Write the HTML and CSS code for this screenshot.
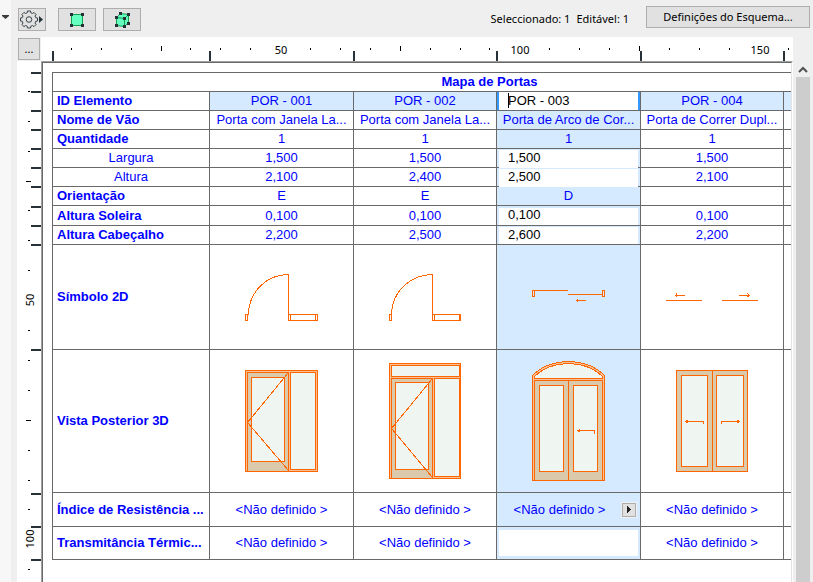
FILE: index.html
```html
<!DOCTYPE html>
<html lang="pt">
<head>
<meta charset="utf-8">
<title>Mapa de Portas</title>
<link rel="stylesheet" href="styles.css">
</head>
<body>
<aside class="rail">
  <svg class="rail-arrow" width="7" height="4" viewBox="0 0 7 4"><path d="M0 0h7v1L3.500 4 0 1z" fill="#3c3c3c"/></svg>
</aside>
<main class="main">
  <header class="toolbar">
    <button class="tool tool-settings" type="button" aria-label="Opções">
      <svg width="24" height="20" viewBox="0 0 24 20">
        <g fill="none" stroke="#37444a" stroke-width="1" stroke-linejoin="round">
          <path d="M7.200 3.800 7.500 2H10.500L10.800 3.800 12.500 4.500 14 3.400 16.100 5.500 15 7 15.700 8.700 17.500 9V12L15.700 12.300 15 14 16.100 15.500 14 17.600 12.500 16.500 10.800 17.200 10.500 19H7.500L7.200 17.200 5.500 16.500 4 17.600 1.900 15.500 3 14 2.300 12.300.5 12V9L2.300 8.700 3 7 1.900 5.500 4 3.400 5.500 4.500z" transform="translate(0 -1)"/>
          <circle cx="9" cy="9.500" r="2.800"/>
        </g>
        <path d="M19 6l4 3.500-4 3.500z" fill="#263238"/>
      </svg>
    </button>
    <button class="tool tool-wide" type="button" aria-label="Selecionar em 2D">
      <svg width="16" height="16" viewBox="0 0 16 16" shape-rendering="crispEdges">
        <path d="M2.500 2.500h11v11h-11z" fill="#66ffc2" stroke="#12a04c"/>
        <path d="M1 1h3v3H1zM12 1h3v3h-3zM1 12h3v3H1zM12 12h3v3h-3z" fill="#263238"/>
      </svg>
    </button>
    <button class="tool" type="button" aria-label="Selecionar em 3D">
      <svg width="16" height="16" viewBox="0 0 16 16">
        <path d="M2.500 5.500 6.500 1.500 14.500 2.500V10.500L10.500 14.500 2.500 13.500z" fill="#66ffc2" stroke="#12a04c"/>
        <path d="M2.500 5.500 10.500 6.500 14.500 2.500M10.500 6.500V14.500" fill="none" stroke="#12a04c"/>
        <path d="M5 0h3v3H5zM13 1h3v3h-3zM1 4h3v3H1zM9 5h3v3H9zM13 10h3v3h-3zM1 12h3v3H1zM9 13h3v3H9z" fill="#263238" shape-rendering="crispEdges"/>
      </svg>
    </button>
    <p class="status"><span>Seleccionado: 1</span><span>Editável: 1</span></p>
    <button class="scheme" type="button">Definições do Esquema...</button>
  </header>
  <section class="workspace">
    <div class="corner"><button class="corner-button" type="button">...</button></div>
    <svg class="ruler ruler-top" shape-rendering="crispEdges">
      <g transform="translate(-41 -37)">
        <path fill="#263238" d="M52 51h2v10h-2zM209 51h2v10h-2zM353 51h2v10h-2zM496 51h2v10h-2zM640 51h2v10h-2zM783 51h2v10h-2z"/>
        <path fill="#000" d="M71 48h1v2h-1zM101 48h1v2h-1zM131 48h1v2h-1zM161 46h1v5h-1zM190 48h1v2h-1zM220 48h1v2h-1zM250 48h1v2h-1zM310 48h1v2h-1zM340 48h1v2h-1zM370 48h1v2h-1zM400 46h1v5h-1zM430 48h1v2h-1zM460 48h1v2h-1zM489 48h1v2h-1zM549 48h1v2h-1zM579 48h1v2h-1zM609 48h1v2h-1zM639 46h1v5h-1zM669 48h1v2h-1zM699 48h1v2h-1zM729 48h1v2h-1zM788 48h1v2h-1z"/>
        <text x="281" y="54">50</text>
        <text x="520" y="54">100</text>
        <text x="760" y="54">150</text>
      </g>
    </svg>
    <svg class="ruler ruler-left" shape-rendering="crispEdges">
      <g transform="translate(-17 -61)">
        <path fill="#263238" d="M31 72h10v2H31zM31 91h10v2H31zM31 110h10v2H31zM31 129h10v2H31zM31 148h10v2H31zM31 167h10v2H31zM31 186h10v2H31zM31 206h10v2H31zM31 225h10v2H31zM31 244h10v2H31zM31 349h10v2H31zM31 493h10v2H31zM31 526h10v2H31zM31 559h10v2H31z"/>
        <path fill="#000" d="M28 91h2v1h-2zM28 121h2v1h-2zM28 151h2v1h-2zM26 181h5v1h-5zM28 210h2v1h-2zM28 240h2v1h-2zM28 270h2v1h-2zM28 330h2v1h-2zM28 360h2v1h-2zM28 390h2v1h-2zM26 420h5v1h-5zM28 450h2v1h-2zM28 480h2v1h-2zM28 509h2v1h-2zM28 569h2v1h-2z"/>
        <text transform="translate(34 300) rotate(-90)">50</text>
        <text transform="translate(34 539) rotate(-90)">100</text>
      </g>
    </svg>
    <div class="canvas"><div class="canvas-inner">
      <table class="schedule">
        <colgroup><col class="c-label"><col class="c-wide"><col class="c-door"><col class="c-wide"><col class="c-door"><col class="c-door"></colgroup>
        <tbody>
        <tr><th colspan="6" class="title">Mapa de Portas</th></tr>
        <tr class="ids"><th>ID Elemento</th><td>POR - 001</td><td>POR - 002</td>
          <td class="active"><input class="field" type="text" value="POR - 003" aria-label="ID Elemento"><span class="caret"></span></td>
          <td>POR - 004</td><td></td></tr>
        <tr><th>Nome de Vão</th><td>Porta com Janela La...</td><td>Porta com Janela La...</td><td class="sel">Porta de Arco de Cor...</td><td>Porta de Correr Dupl...</td><td></td></tr>
        <tr><th>Quantidade</th><td>1</td><td>1</td><td class="sel">1</td><td>1</td><td></td></tr>
        <tr><th class="sub">Largura</th><td>1,500</td><td>1,500</td><td class="sel"><input class="field over" type="text" value="1,500" aria-label="Largura"></td><td>1,500</td><td></td></tr>
        <tr><th class="sub">Altura</th><td>2,100</td><td>2,400</td><td class="sel"><input class="field over" type="text" value="2,500" aria-label="Altura"></td><td>2,100</td><td></td></tr>
        <tr><th>Orientação</th><td>E</td><td>E</td><td class="sel">D</td><td></td><td></td></tr>
        <tr class="tall"><th>Altura Soleira</th><td>0,100</td><td>0,100</td><td class="sel"><input class="field" type="text" value="0,100" aria-label="Altura Soleira"></td><td>0,100</td><td></td></tr>
        <tr><th>Altura Cabeçalho</th><td>2,200</td><td>2,500</td><td class="sel"><input class="field" type="text" value="2,600" aria-label="Altura Cabeçalho"></td><td>2,200</td><td></td></tr>
        <tr class="plan"><th>Símbolo 2D</th>
          <td><svg width="143" height="104" viewBox="210 245 143 104"><path d="M248.500 314.500A40 40 0 0 1 288.500 274.500V314.500M245.500 314.500h2v6h-2zM288.500 314.500h29v6h-29zM290.500 314.500v6M315.500 314.500v6"/></svg></td>
          <td><svg width="142" height="104" viewBox="354 245 142 104"><path d="M391.500 314.500A41 40 0 0 1 432.500 274.500V314.500M389.500 314.500h2v6h-2zM432.500 314.500h28v6h-28zM434.500 314.500v6M459.500 314.500v6"/></svg></td>
          <td class="sel"><svg width="143" height="104" viewBox="497 245 143 104"><path d="M532.500 290.500h2v6h-2zM602.500 290.500h2v6h-2zM534 290.500h34M568 294.500h35M576 300.500h10M577.500 299v3"/></svg></td>
          <td><svg width="142" height="104" viewBox="641 245 142 104"><path d="M666 300.500h36M722 300.500h36M675 295.500h10M676.500 293v4M739 295.500h11M748.500 294v3M747.500 293v1M747.500 296v1"/></svg></td>
          <td></td></tr>
        <tr class="view"><th>Vista Posterior 3D</th>
          <td><svg width="143" height="142" viewBox="210 350 143 142">
            <path class="frame" d="M245.500 370.500h72v101h-72z"/><path class="leaf" d="M247.500 372.500h41v99h-41z"/>
            <path class="glass" d="M251.500 377.500h33v84h-33zM290.500 372.500h25v97h-25z"/><path d="M288.500 372.500 247.500 422.500 288.500 470.500"/></svg></td>
          <td><svg width="142" height="142" viewBox="354 350 142 142">
            <path class="frame" d="M389.500 363.500h71v115h-71z"/><path class="leaf" d="M391.500 378.500h41v100h-41z"/>
            <path class="glass" d="M391.500 365.500h68v11h-68zM395.500 382.500h33v87h-33zM434.500 378.500h25v98h-25z"/><path d="M432.500 378.500 391.500 428.500 432.500 477.500"/></svg></td>
          <td class="sel"><svg width="143" height="142" viewBox="497 350 143 142">
            <path class="frame" d="M532.500 480.500V375.500C551 357 586 357 604.500 375.500V480.500z"/>
            <path class="glass" d="M534.500 378.500V376.500C552 359.500 585 359.500 602.500 376.500V378.500z"/>
            <path class="leaf" d="M534.500 380.500h34v100h-34zM568.500 380.500h34v100h-34z"/>
            <path class="glass" d="M539.500 385.500h24v86h-24zM573.500 385.500h24v86h-24z"/><path d="M577 430.500h17.500V434M578.500 430v2M579.500 429v3"/></svg></td>
          <td><svg width="142" height="142" viewBox="641 350 142 142">
            <path class="leaf" d="M676.500 370.500h36v101h-36zM712.500 370.500h35v101h-35z"/>
            <path class="glass" d="M681.500 375.500h26v91h-26zM716.500 375.500h27v91h-27z"/><path d="M685 421.500h18.500V424M686.500 420v3M687.500 420v3M740 421.500h-18.500V424M737.500 420v3M738.500 420v3"/></svg></td>
          <td></td></tr>
        <tr class="index"><th>Índice de Resistência ...</th><td>&lt;Não definido &gt;</td><td>&lt;Não definido &gt;</td>
          <td class="sel"><div class="choice"><span>&lt;Não definido &gt;</span><button class="more" type="button" aria-label="Escolher valor"><svg width="4" height="7" viewBox="0 0 4 7"><path d="M0 0l4 3.500L0 7z" fill="#222"/></svg></button></div></td>
          <td>&lt;Não definido &gt;</td><td></td></tr>
        <tr class="trans"><th>Transmitância Térmic...</th><td>&lt;Não definido &gt;</td><td>&lt;Não definido &gt;</td>
          <td class="sel"><input class="field large" type="text" value="" aria-label="Transmitância Térmica"></td>
          <td>&lt;Não definido &gt;</td><td></td></tr>
        </tbody>
      </table>
    </div></div>
    <div class="scrollbar">
      <svg class="scroll-up" width="15" height="16" viewBox="0 0 15 16"><path d="M3 11 7 7l4 4" fill="none" stroke="#505050" stroke-width="2"/></svg>
      <div class="thumb"></div>
    </div>
  </section>
</main>
</body>
</html>
```
FILE: styles.css
```css
* { box-sizing: border-box; }

body {
  margin: 0;
  height: 100vh;
  display: flex;
  overflow: hidden;
  background: #efefef;
  font: 11px/16px "Noto Sans", "Open Sans", sans-serif;
  color: #000;
}

button, input { font: inherit; color: inherit; border-radius: 0; }

button {
  padding: 0;
  border: 1px solid #adadad;
  background: #e1e1e1;
  display: flex;
  align-items: center;
  justify-content: center;
}

.rail { flex: none; width: 11px; background: #f7f7f7; padding: 15px 0 0 2px; }
.rail-arrow { display: block; }

.main {
  flex: 1;
  min-width: 0;
  margin-left: 6px;
  display: flex;
  flex-direction: column;
}

.toolbar {
  flex: none;
  height: 37px;
  padding: 6px 3px 0 1px;
  display: flex;
  align-items: flex-start;
}

.tool { width: 38px; height: 23px; margin-top: 2px; }
.tool-settings { width: 28px; margin-right: 12px; }
.tool-wide { margin-right: 7px; }
.tool svg { display: block; flex: none; }

.status {
  margin: 5px 17px 0 auto;
  display: flex;
  gap: 6px;
  white-space: nowrap;
}

.scheme { width: 164px; height: 22px; }

.workspace {
  flex: 1;
  min-height: 0;
  display: grid;
  grid-template: 24px minmax(0, 1fr) / 24px minmax(0, 1fr) 20px;
}

.corner { padding: 1px; }
.corner-button { width: 22px; height: 22px; }

.ruler { display: block; width: 100%; height: 100%; background: #fff; overflow: hidden; }
.ruler text { text-anchor: middle; }
.ruler-left { grid-area: 2 / 1; }

.canvas {
  grid-area: 2 / 2;
  min-width: 0;
  background: #fff;
  border: solid #a0a0a0;
  border-width: 1px 1px 0;
  border-right-color: #fff;
}

.canvas-inner {
  height: 100%;
  overflow: hidden;
  padding: 9px 0 0 9px;
  border: solid #696969;
  border-width: 1px 1px 0;
  border-right-color: #e3e3e3;
}

.schedule {
  width: 875px;
  table-layout: fixed;
  border-collapse: separate;
  border-spacing: 0;
  border: solid #696969;
  border-width: 1px 0 0 1px;
  font: 13px/18px "Liberation Sans", Arial, sans-serif;
  color: #00f;
}

.c-label { width: 157px; }
.c-wide { width: 144px; }
.c-door { width: 143px; }

.schedule th,
.schedule td {
  height: 19px;
  padding: 0;
  border: solid #696969;
  border-width: 0 1px 1px 0;
  text-align: center;
  vertical-align: middle;
  white-space: nowrap;
}

.schedule th { padding-left: 4px; text-align: left; font-weight: bold; }
.schedule th.title { padding: 0; text-align: center; }
.schedule th.sub { padding: 0; text-align: center; font-weight: normal; }

.ids td, .schedule .sel { background: #d6eaff; }
.schedule .tall td, .schedule .tall th { height: 20px; }
.schedule .plan td, .schedule .plan th { height: 105px; }
.schedule .view td, .schedule .view th { height: 143px; }
.schedule .index td, .schedule .index th { height: 34px; }
.schedule .trans td, .schedule .trans th { height: 33px; }

.field {
  display: block;
  width: calc(100% - 4px);
  height: 17px;
  margin: 1px 2px 0;
  padding: 0 0 2px 9px;
  border: 0;
  outline: 0;
  background: #fff;
  color: #000;
}

.field.over { position: relative; height: 18px; margin-bottom: -1px; }
.field.large { height: 26px; margin-top: 0; }

.schedule .active {
  position: relative;
  background: #fff;
  box-shadow: inset 2px 0 #3399ff, inset -2px 0 #3399ff;
}

.caret {
  position: absolute;
  left: 11px;
  top: 1px;
  width: 1px;
  height: 15px;
  background: #000;
}

.schedule svg {
  display: block;
  fill: none;
  stroke: #ff6600;
  stroke-width: 1;
  shape-rendering: crispEdges;
}

.schedule .frame { fill: #f5c196; }
.schedule .leaf { fill: #dbc9ab; }
.schedule .glass { fill: #eff5f1; }

.choice { display: flex; align-items: center; padding-right: 4px; }
.choice span { flex: 1; }
.more { width: 14px; height: 14px; outline: 1px solid #f0f0f0; }
.schedule .more svg { stroke: none; }

.scrollbar {
  grid-area: 2 / 3;
  margin: 0 3px;
  width: 14px;
  display: flex;
  flex-direction: column;
}

.scroll-up { flex: none; display: block; }
.thumb { flex: 1; background: #cdcdcd; }
```
